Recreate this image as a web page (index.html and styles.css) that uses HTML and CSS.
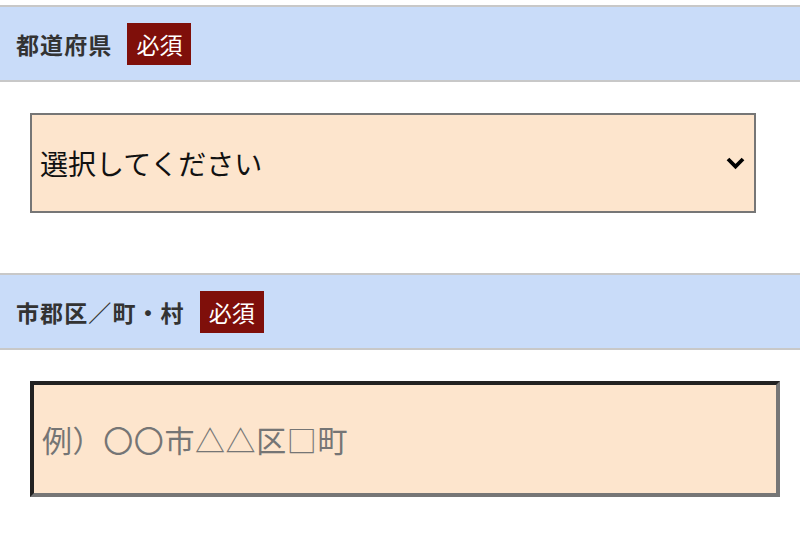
FILE: index.html
```html
<!DOCTYPE html>
<html lang="ja">
<head>
<meta charset="utf-8">
<link rel="stylesheet" href="styles.css">
</head>
<body>
<div class="form">
  <div class="section-head">
    <span class="label">都道府県</span>
    <span class="badge">必須</span>
  </div>
  <div class="field field-select">
    <div class="select">
      <span class="select-text">選択してください</span>
      <svg class="chevron" width="19" height="13" viewBox="0 0 19 13"><polyline points="2,2 9.5,9.5 17,2" fill="none" stroke="#000" stroke-width="3.8"/></svg>
    </div>
  </div>
  <div class="section-head">
    <span class="label">市郡区／町・村</span>
    <span class="badge">必須</span>
  </div>
  <div class="field field-input">
    <input class="text-input" type="text" placeholder="例）〇〇市△△区□町">
  </div>
</div>
</body>
</html>
```
FILE: styles.css
```css
html, body {
  margin: 0;
  padding: 0;
  background: #fff;
}
body {
  font-family: "Noto Sans CJK JP", "Noto Sans", sans-serif;
  padding-top: 5px;
}
.section-head {
  display: flex;
  align-items: center;
  height: 73px;
  border-top: 2px solid #c8c8c8;
  border-bottom: 2px solid #c8c8c8;
  background: #c9dcf9;
  padding-left: 16px;
}
.label {
  font-size: 23px;
  font-weight: bold;
  color: #333;
  letter-spacing: 1.1px;
}
.badge {
  margin-left: 15px;
  background: #7f0f0a;
  color: #fff;
  font-size: 23px;
  line-height: 42px;
  height: 42px;
  padding: 0 9px;
}
.field {
  padding: 31px 0 0 30px;
}
.field-select {
  padding-bottom: 60px;
}
.select {
  box-sizing: border-box;
  width: 726px;
  height: 100px;
  border: 2px solid #767676;
  background: #fde5cd;
  display: flex;
  align-items: center;
  justify-content: space-between;
  padding: 0 9px 0 8px;
}
.select-text {
  font-size: 28px;
  color: #111;
}
.chevron {
  display: block;
}
.text-input {
  box-sizing: border-box;
  width: 750px;
  height: 116px;
  border: 4px solid;
  border-color: #222 #767676 #767676 #222;
  background: #fde5cd;
  font-family: "Noto Sans CJK JP", sans-serif;
  font-size: 30px;
  letter-spacing: 0.6px;
  padding: 0 8px;
  outline: none;
}
.text-input::placeholder {
  color: #757575;
}
```
